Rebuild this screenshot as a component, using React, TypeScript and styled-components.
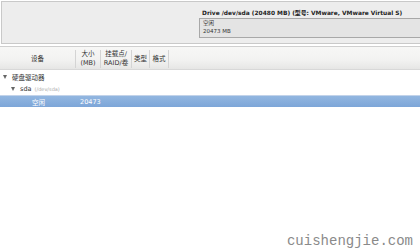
import React from 'react';
import styled, { createGlobalStyle } from 'styled-components';

const GlobalStyle = createGlobalStyle`
  html, body {
    margin: 0;
    padding: 0;
    background: #ffffff;
  }
  body {
    width: 420px;
    height: 251px;
    overflow: hidden;
    font-family: "DejaVu Sans", "Noto Sans CJK SC", sans-serif;
  }
`;

const Page = styled.div`
  position: relative;
  width: 420px;
  height: 251px;
  background: #ffffff;
  display: flex;
  flex-direction: column;
`;

const DrivePanel = styled.div`
  height: 41px;
  margin: 1px 0 0 1px;
  border: 1px solid #c9c9c9;
  border-right: none;
  background: #ededed;
  display: flex;
  justify-content: flex-end;
  align-items: flex-start;
`;

const DriveInfo = styled.div`
  width: 221px;
  padding-top: 7px;
  display: flex;
  flex-direction: column;
`;

const DriveTitle = styled.div`
  font-size: 5.9px;
  font-weight: bold;
  color: #222;
  height: 8px;
  line-height: 8px;
  padding-left: 3px;
  white-space: nowrap;
`;

const DriveBar = styled.div`
  margin-top: 1px;
  height: 16px;
  border: 1px solid #a8a8a8;
  border-right: none;
  background: #e4e4e4;
  padding: 1px 3px;
  font-size: 5.5px;
  color: #333;
  line-height: 7.5px;
`;

const TreeFrame = styled.div`
  margin-top: 2px;
  border-top: 1px solid #cfcfcf;
  flex: 1;
  display: flex;
  flex-direction: column;
`;

const HeaderRow = styled.div`
  height: 22px;
  display: flex;
  background: linear-gradient(#f7f7f6, #f2f2f1 60%, #e6e6e5);
  border-bottom: 1px solid #d8d8d8;
`;

const HeaderCell = styled.div<{ $w?: number }>`
  ${(p) => (p.$w ? `width: ${p.$w}px;` : 'flex: 1;')}
  box-sizing: border-box;
  border-right: 1px solid #d4d4d4;
  font-size: 6.5px;
  color: #333;
  display: flex;
  flex-direction: column;
  align-items: center;
  justify-content: center;
  line-height: 9px;
  margin: 3px 0 1px;
  &:last-child {
    border-right: none;
  }
`;

const Spacer = styled.div`
  height: 1px;
`;

const TreeRow = styled.div<{ $selected?: boolean }>`
  position: relative;
  height: 12px;
  display: flex;
  align-items: center;
  font-size: 6.5px;
  color: ${(p) => (p.$selected ? '#ffffff' : '#333')};
  background: ${(p) =>
    p.$selected ? 'linear-gradient(#92b6e0, #7da6d8)' : 'transparent'};
  ${(p) => (p.$selected ? 'border-top: 1px solid #c2d3ea;' : '')}
  box-sizing: border-box;
`;

const Indent = styled.span<{ $w: number }>`
  display: inline-block;
  width: ${(p) => p.$w}px;
  flex-shrink: 0;
`;

const Arrow = styled.span`
  display: inline-block;
  width: 0;
  height: 0;
  border-left: 2.5px solid transparent;
  border-right: 2.5px solid transparent;
  border-top: 4px solid #666;
  margin-right: 5px;
`;

const Dim = styled.span`
  color: #aaa;
  font-size: 5px;
  margin-left: 3px;
`;

const SizeCell = styled.span`
  position: absolute;
  left: 80px;
`;

const Watermark = styled.div`
  position: absolute;
  right: 7px;
  bottom: 2px;
  font-family: "Liberation Mono", monospace;
  font-size: 14px;
  color: #8a8a8a;
`;

export default function App() {
  return (
    <Page>
      <GlobalStyle />
      <DrivePanel>
        <DriveInfo>
          <DriveTitle>Drive /dev/sda (20480 MB) (型号: VMware, VMware Virtual S)</DriveTitle>
          <DriveBar>
            <div>空闲</div>
            <div>20473 MB</div>
          </DriveBar>
        </DriveInfo>
      </DrivePanel>
      <TreeFrame>
        <HeaderRow>
          <HeaderCell $w={76}>设备</HeaderCell>
          <HeaderCell $w={25}>
            <span>大小</span>
            <span>(MB)</span>
          </HeaderCell>
          <HeaderCell $w={31}>
            <span>挂载点/</span>
            <span>RAID/卷</span>
          </HeaderCell>
          <HeaderCell $w={18}>类型</HeaderCell>
          <HeaderCell $w={19}>格式</HeaderCell>
          <HeaderCell />
        </HeaderRow>
        <Spacer />
        <TreeRow>
          <Indent $w={3} />
          <Arrow />
          硬盘驱动器
        </TreeRow>
        <TreeRow>
          <Indent $w={11} />
          <Arrow />
          sda<Dim>(/dev/sda)</Dim>
        </TreeRow>
        <TreeRow $selected>
          <Indent $w={32} />
          空闲
          <SizeCell>20473</SizeCell>
        </TreeRow>
      </TreeFrame>
      <Watermark>cuishengjie.com</Watermark>
    </Page>
  );
}
